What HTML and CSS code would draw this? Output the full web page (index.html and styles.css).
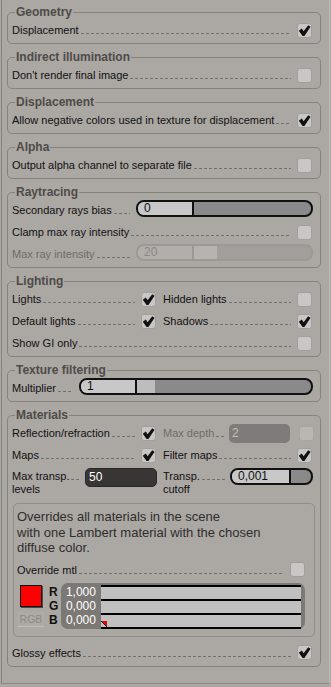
FILE: index.html
```html
<!DOCTYPE html>
<html lang="en">
<head>
    <meta charset="UTF-8">
    <title>Render settings</title>
    <link rel="stylesheet" href="styles.css">
</head>
<body>
    <div class="panel">
        <!-- Geometry -->
        <fieldset class="group">
            <legend>Geometry</legend>
            <div class="row">
                <span class="lbl">Displacement<i class="dots"></i></span>
                <span class="check"><svg viewBox="0 0 13 13"><path d="M0.8 6.8 L3.8 4.6 L5.6 7.2 L10.2 1.2 L12.6 2.8 L6.4 12 L4.6 12 Z"/></svg></span>
            </div>
        </fieldset>

        <fieldset class="group">
            <legend>Indirect illumination</legend>
            <div class="row">
                <span class="lbl">Don't render final image<i class="dots"></i></span>
                <span class="check"></span>
            </div>
        </fieldset>

        <fieldset class="group">
            <legend>Displacement</legend>
            <div class="row">
                <span class="lbl">Allow negative colors used in texture for displacement<i class="dots"></i></span>
                <span class="check"><svg viewBox="0 0 13 13"><path d="M0.8 6.8 L3.8 4.6 L5.6 7.2 L10.2 1.2 L12.6 2.8 L6.4 12 L4.6 12 Z"/></svg></span>
            </div>
        </fieldset>

        <fieldset class="group">
            <legend>Alpha</legend>
            <div class="row">
                <span class="lbl">Output alpha channel to separate file<i class="dots"></i></span>
                <span class="check"></span>
            </div>
        </fieldset>

        <!-- Raytracing -->
        <fieldset class="group">
            <legend>Raytracing</legend>
            <div class="row">
                <span class="lbl">Secondary rays bias<i class="dots"></i></span>
                <div class="spin wide">
                    <span class="val">0</span>
                    <span class="track"></span>
                </div>
            </div>
            <div class="row">
                <span class="lbl">Clamp max ray intensity<i class="dots"></i></span>
                <span class="check"></span>
            </div>
            <div class="row">
                <span class="lbl off">Max ray intensity<i class="dots"></i></span>
                <div class="spin wide disabled">
                    <span class="val">20</span>
                    <span class="fill" style="width:23px"></span>
                    <span class="track"></span>
                </div>
            </div>
        </fieldset>

        <!-- Lighting -->
        <fieldset class="group">
            <legend>Lighting</legend>
            <div class="cols">
                <div class="row">
                    <span class="lbl">Lights<i class="dots"></i></span>
                    <span class="check"><svg viewBox="0 0 13 13"><path d="M0.8 6.8 L3.8 4.6 L5.6 7.2 L10.2 1.2 L12.6 2.8 L6.4 12 L4.6 12 Z"/></svg></span>
                </div>
                <div class="row">
                    <span class="lbl">Hidden lights<i class="dots"></i></span>
                    <span class="check"></span>
                </div>
                <div class="row">
                    <span class="lbl">Default lights<i class="dots"></i></span>
                    <span class="check"><svg viewBox="0 0 13 13"><path d="M0.8 6.8 L3.8 4.6 L5.6 7.2 L10.2 1.2 L12.6 2.8 L6.4 12 L4.6 12 Z"/></svg></span>
                </div>
                <div class="row">
                    <span class="lbl">Shadows<i class="dots"></i></span>
                    <span class="check"><svg viewBox="0 0 13 13"><path d="M0.8 6.8 L3.8 4.6 L5.6 7.2 L10.2 1.2 L12.6 2.8 L6.4 12 L4.6 12 Z"/></svg></span>
                </div>
                <div class="row span">
                    <span class="lbl">Show GI only<i class="dots"></i></span>
                    <span class="check"></span>
                </div>
            </div>
        </fieldset>

        <fieldset class="group">
            <legend>Texture filtering</legend>
            <div class="row">
                <span class="lbl">Multiplier<i class="dots"></i></span>
                <div class="spin long">
                    <span class="val">1</span>
                    <span class="fill" style="width:18px"></span>
                    <span class="track"></span>
                </div>
            </div>
        </fieldset>

        <!-- Materials -->
        <fieldset class="group">
            <legend>Materials</legend>
            <div class="cols">
                <div class="row">
                    <span class="lbl">Reflection/refraction<i class="dots"></i></span>
                    <span class="check"><svg viewBox="0 0 13 13"><path d="M0.8 6.8 L3.8 4.6 L5.6 7.2 L10.2 1.2 L12.6 2.8 L6.4 12 L4.6 12 Z"/></svg></span>
                </div>
                <div class="row">
                    <span class="lbl off">Max depth<i class="dots short"></i></span>
                    <span class="field grey">2</span>
                    <span class="check dim"></span>
                </div>
                <div class="row">
                    <span class="lbl">Maps<i class="dots"></i></span>
                    <span class="check"><svg viewBox="0 0 13 13"><path d="M0.8 6.8 L3.8 4.6 L5.6 7.2 L10.2 1.2 L12.6 2.8 L6.4 12 L4.6 12 Z"/></svg></span>
                </div>
                <div class="row">
                    <span class="lbl">Filter maps<i class="dots"></i></span>
                    <span class="check"><svg viewBox="0 0 13 13"><path d="M0.8 6.8 L3.8 4.6 L5.6 7.2 L10.2 1.2 L12.6 2.8 L6.4 12 L4.6 12 Z"/></svg></span>
                </div>
                <div class="row tall">
                    <span class="lbl2">
                        <span class="line">Max transp.<i class="dots short"></i></span>
                        <span>levels</span>
                    </span>
                    <span class="field dark">50</span>
                </div>
                <div class="row tall">
                    <span class="lbl2">
                        <span class="line">Transp.<i class="dots short"></i></span>
                        <span>cutoff</span>
                    </span>
                    <div class="spin small">
                        <span class="val">0,001</span>
                        <span class="track"></span>
                    </div>
                </div>
            </div>

            <div class="override">
                <p class="note">Overrides all materials in the scene<br>with one Lambert material with the chosen<br>diffuse color.</p>
                <div class="row mtl">
                    <span class="lbl">Override mtl<i class="dots"></i></span>
                    <span class="check"></span>
                </div>
                <div class="color">
                    <div class="swatch-col">
                        <span class="swatch"></span>
                        <span class="rgb">RGB</span>
                    </div>
                    <div class="letters">R<br>G<br>B</div>
                    <div class="vals">
                        <div class="nums">1,000<br>0,000<br>0,000</div>
                        <div class="bars">
                            <div class="bar"></div>
                            <div class="bar"></div>
                            <div class="bar b">
                                <svg class="mark" viewBox="0 0 6 6"><path d="M0 0 L6 6 L6 0 Z" fill="#e00"/><path d="M0 0 L6 6" stroke="#111" stroke-width="1"/></svg>
                            </div>
                        </div>
                    </div>
                </div>
            </div>

            <div class="row glossy">
                <span class="lbl">Glossy effects<i class="dots"></i></span>
                <span class="check"><svg viewBox="0 0 13 13"><path d="M0.8 6.8 L3.8 4.6 L5.6 7.2 L10.2 1.2 L12.6 2.8 L6.4 12 L4.6 12 Z"/></svg></span>
            </div>
        </fieldset>
    </div>
</body>
</html>
```

FILE: styles.css
```css
*{
    margin: 0;
    padding: 0;
    box-sizing: border-box;
}
body{
    background-color: #aba7a3;
    font: 11px "Liberation Sans", Arial, sans-serif;
    color: #111;
}
.panel{
    margin-left: 1px;
    width: 329px;
    height: 684px;
    border-left: 1px solid #85817e;
    border-right: 1px solid #bcb8b4;
    border-bottom: 1px solid #8d8986;
    padding: 6px 8px 0 5px;
}

/* group boxes */
.group{
    border: 1px solid #86827f;
    border-radius: 5px;
    padding: 0 8px 2px 4px;
    margin-top: 7px;
    min-width: 0;
}
.group:first-child{
    margin-top: 0;
}
legend{
    font-weight: bold;
    font-size: 12px;
    line-height: 13px;
    color: #4e4b48;
    padding: 0 1px;
    margin-left: 3px;
}

/* rows */
.row{
    display: flex;
    align-items: center;
    height: 22px;
}
.lbl{
    flex: 1;
    display: flex;
    align-items: baseline;
    white-space: nowrap;
    min-width: 0;
}
.lbl.off{
    color: #6f6c69;
}
.dots{
    flex: 1;
    height: 1px;
    margin: 0 6px 0 2px;
    background: repeating-linear-gradient(to right, #74706d 0 3px, transparent 3px 5px);
}
.dots.short{
    margin-right: 4px;
}
.cols{
    display: grid;
    grid-template-columns: 144px 1fr;
    column-gap: 7px;
}
.cols .span{
    grid-column: 1 / -1;
}

/* checkbox */
.check{
    flex: none;
    width: 15px;
    height: 15px;
    border: 1px solid #a29e9b;
    border-radius: 3px;
    background-color: #c9c7c5;
    display: flex;
    align-items: center;
    justify-content: center;
}
.check svg{
    width: 13px;
    height: 13px;
    fill: #111;
}
.check.dim{
    margin: 0 -2px 0 9px;
    background-color: #b9b6b3;
    border-color: #a7a4a1;
}

/* spinner with slider */
.spin{
    flex: none;
    display: flex;
    height: 17px;
    margin-bottom: 4px;
    border: 2px solid #111;
    border-radius: 8px;
    overflow: hidden;
    background-color: #8a8a8a;
}
.spin .val{
    width: 56px;
    flex: none;
    background-color: #c8c8c8;
    border-right: 2px solid #111;
    padding-left: 6px;
    font-size: 12px;
    line-height: 13px;
    color: #111;
}
.spin .fill{
    flex: none;
    background-color: #bdbdbd;
}
.spin .track{
    flex: 1;
}
.spin.wide{
    width: 177px;
    margin-right: -1px;
}
.spin.long{
    width: 234px;
    margin-right: -1px;
}
.spin.small{
    width: 83px;
    margin: 2px -1px 0 0;
}
.spin.small .val{
    width: 59px;
}
.spin.disabled{
    border-color: #9b9895;
    background-color: #a19e9b;
}
.spin.disabled .val{
    background-color: #b1aeab;
    border-right-color: #9b9895;
    color: #8a8784;
}
.spin.disabled .fill{
    background-color: #b6b3b0;
}

/* plain value fields */
.field{
    flex: none;
    height: 19px;
    border-radius: 5px;
    padding-left: 3px;
    font-size: 12px;
    line-height: 19px;
}
.field.grey{
    width: 61px;
    background-color: #7f7b78;
    color: #c2bfbc;
}
.field.dark{
    width: 72px;
    margin: 2px -1px 0 0;
    background-color: #383634;
    border: 1px solid #2a2826;
    line-height: 16px;
    color: #fff;
}

/* two line labels */
.row.tall{
    height: 30px;
    align-items: flex-start;
}
.lbl2{
    flex: 1;
    display: flex;
    flex-direction: column;
    padding-top: 4px;
    line-height: 13px;
    white-space: nowrap;
}
.lbl2 .line{
    display: flex;
    align-items: baseline;
}

/* override material box */
.override{
    margin: 7px -3px 0 1px;
    border: 1px solid #8f8b88;
    border-radius: 5px;
    padding: 5px 9px 7px 3px;
}
.note{
    font-size: 13px;
    line-height: 15.5px;
    color: #2f2e2d;
}
.row.mtl{
    height: 20px;
    margin-top: 4px;
}
.color{
    display: flex;
    align-items: flex-start;
    margin-top: 3px;
}
.swatch-col{
    width: 26px;
    margin-left: 1px;
    display: flex;
    flex-direction: column;
    align-items: center;
}
.swatch{
    width: 22px;
    height: 22px;
    margin-top: 2px;
    background-color: #f00;
    border: 1px solid #111;
    box-shadow: 1px 1px 0 #4a4845;
}
.rgb{
    width: 26px;
    height: 15px;
    margin-top: 5px;
    text-align: center;
    font-size: 10.5px;
    line-height: 14px;
    color: #8c8986;
    background-color: #aeaaa6;
    border-bottom: 1px solid #c0bcb8;
}
.letters{
    width: 12px;
    margin-left: 5px;
    padding-top: 2px;
    font-weight: bold;
    font-size: 12px;
    line-height: 14px;
    color: #111;
}
.vals{
    display: flex;
    width: 246px;
    height: 46px;
    padding: 2px 4px 0 5px;
    background-color: #7b7875;
    border-radius: 7px;
}
.nums{
    width: 35px;
    font-size: 12px;
    line-height: 14px;
    color: #fff;
}
.bars{
    flex: 1;
    border-top: 2px solid #000;
}
.bar{
    height: 14px;
    background-color: #c0c0c0;
    border-bottom: 2px solid #000;
}
.bar.b{
    position: relative;
}
.mark{
    position: absolute;
    left: 0;
    bottom: 0;
    width: 6px;
    height: 6px;
}
.row.glossy{
    margin-top: 5px;
}
```
